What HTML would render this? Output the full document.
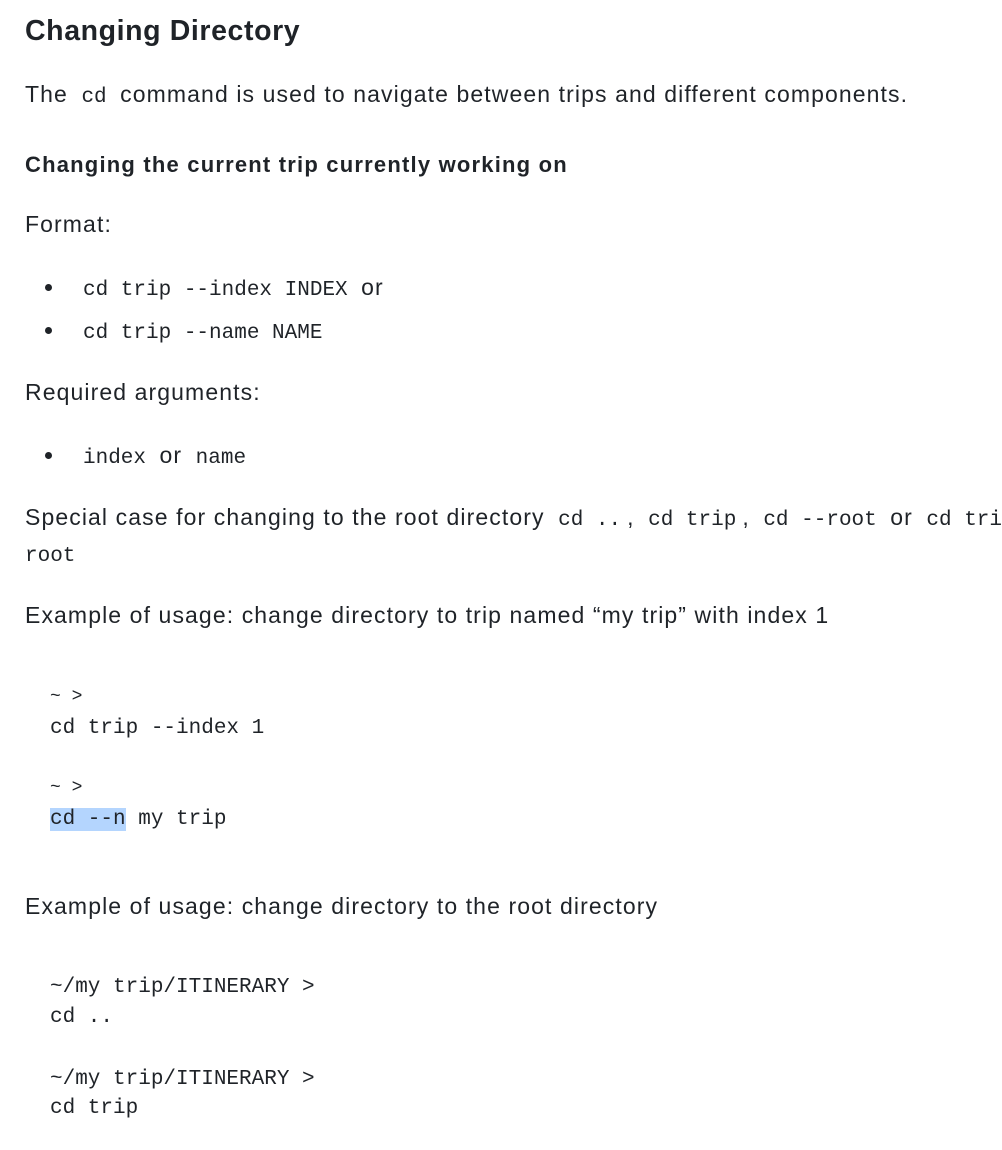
<!DOCTYPE html>
<html><head><meta charset="utf-8"><style>
body{margin:0;background:#fff;width:1002px;height:1150px;overflow:hidden;position:relative;font-family:"Liberation Sans",sans-serif;color:#1f2328;}
.l{position:absolute;left:25px;height:40px;line-height:40px;white-space:nowrap;font-size:23px;letter-spacing:1.1px;}
code,.m{font-family:"Liberation Mono",monospace;font-size:21px;letter-spacing:0;}
code{padding:0 6px;}
.b{position:absolute;left:45px;width:7px;height:7px;border-radius:50%;background:#1f2328;}
.m{position:absolute;left:50px;height:30px;line-height:30px;white-space:nowrap;}
.hl{background:#b4d5fe;}
</style></head><body>
<div class="l" style="top:11px;font-size:28.5px;font-weight:bold;letter-spacing:0.6px">Changing Directory</div>
<div class="l" style="top:74px">The <code>cd</code> command is used to navigate between trips and different components.</div>
<div class="l" style="top:145px;font-weight:bold;font-size:22px;letter-spacing:1.2px">Changing the current trip currently working on</div>
<div class="l" style="top:204px">Format:</div>
<div class="b" style="top:284px"></div>
<div class="l" style="top:267px;left:77px"><code>cd trip --index INDEX</code> or</div>
<div class="b" style="top:327px"></div>
<div class="l" style="top:310px;left:77px"><code>cd trip --name NAME</code></div>
<div class="l" style="top:372px">Required arguments:</div>
<div class="b" style="top:452px"></div>
<div class="l" style="top:435px;left:77px"><code>index</code> or <code>name</code></div>
<div class="l" style="top:497px">Special case for changing to the root directory <code>cd ..</code>, <code>cd trip</code>, <code>cd --root</code> or <code>cd trip --</code></div>
<div class="l" style="top:533px;left:19px"><code>root</code></div>
<div class="l" style="top:595px">Example of usage: change directory to trip named “my trip” with index 1</div>
<div class="m" style="top:682px;font-size:18px">~ &gt;</div>
<div class="m" style="top:714px">cd trip --index 1</div>
<div class="m" style="top:773px;font-size:18px">~ &gt;</div>
<div class="m" style="top:805px"><span class="hl">cd --n</span> my trip</div>
<div class="l" style="top:886px">Example of usage: change directory to the root directory</div>
<div class="m" style="top:973px">~/my trip/ITINERARY &gt;</div>
<div class="m" style="top:1003px">cd ..</div>
<div class="m" style="top:1065px">~/my trip/ITINERARY &gt;</div>
<div class="m" style="top:1094px">cd trip</div>
</body></html>
